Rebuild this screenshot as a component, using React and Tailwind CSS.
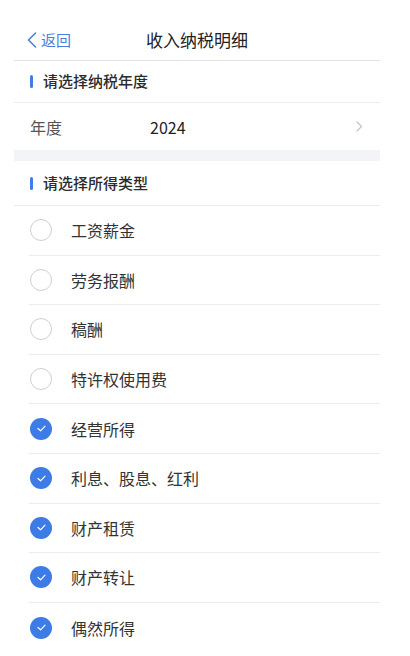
import React, { useState } from "react";

const TYPES = [
  { label: "工资薪金", checked: false },
  { label: "劳务报酬", checked: false },
  { label: "稿酬", checked: false },
  { label: "特许权使用费", checked: false },
  { label: "经营所得", checked: true },
  { label: "利息、股息、红利", checked: true },
  { label: "财产租赁", checked: true },
  { label: "财产转让", checked: true },
  { label: "偶然所得", checked: true },
];

function SectionTitle({ children, className = "" }) {
  return (
    <div className={`flex items-center pl-[16px] border-b border-[#ececec] ${className}`}>
      <span className="w-[3px] h-[13px] rounded-full bg-[#3f7ee8] mr-[10px]" />
      <span className="text-[15px] font-medium text-[#2b2b2b]">{children}</span>
    </div>
  );
}

function Radio({ checked }) {
  if (checked) {
    return (
      <span className="w-[22px] h-[22px] rounded-full bg-[#3d7ce6] flex items-center justify-center">
        <svg width="9" height="7" viewBox="0 0 9 7" fill="none">
          <path d="M1 3.5 L3.6 5.8 L8 1.2" stroke="#fff" strokeWidth="1.2" strokeLinecap="round" strokeLinejoin="round" />
        </svg>
      </span>
    );
  }
  return <span className="w-[22px] h-[22px] rounded-full border border-[#cfcfcf] bg-white" />;
}

export default function App() {
  const [items, setItems] = useState(TYPES);

  const toggle = (idx) =>
    setItems((prev) => prev.map((it, i) => (i === idx ? { ...it, checked: !it.checked } : it)));

  return (
    <div className="min-h-screen bg-white font-['Noto_Sans_CJK_SC','Noto_Sans',sans-serif] text-[#333]">
      <div className="ml-[14px] w-[366px] pt-[20px]">
        {/* header */}
        <div className="relative h-[41px] flex items-center justify-center border-b border-[#e3e3e3]">
          <button className="absolute left-[13px] top-0 h-full flex items-center text-[#4a80d9] text-[15px]">
            <svg width="10" height="16" viewBox="0 0 10 16" fill="none" className="mr-[4px]">
              <path d="M8.5 1 L1.5 8 L8.5 15" stroke="#4a80d9" strokeWidth="1.6" strokeLinecap="round" strokeLinejoin="round" />
            </svg>
            返回
          </button>
          <span className="text-[17px] text-[#222]">收入纳税明细</span>
        </div>

        {/* year section */}
        <SectionTitle className="h-[42px]">请选择纳税年度</SectionTitle>
        <div className="h-[47px] flex items-center pl-[16px] pr-[17px]">
          <span className="w-[120px] text-[16px] text-[#555]">年度</span>
          <span className="flex-1 text-[16px] text-[#222]">2024</span>
          <svg width="7" height="11" viewBox="0 0 7 11" fill="none">
            <path d="M1 1 L5.5 5.5 L1 10" stroke="#c4c4c4" strokeWidth="1.3" strokeLinecap="round" strokeLinejoin="round" />
          </svg>
        </div>
        <div className="h-[11px] bg-[#f3f4f8]" />

        {/* income types */}
        <SectionTitle className="h-[45px]">请选择所得类型</SectionTitle>
        <div className="pl-[15px]">
          {items.map((it, i) => (
            <div
              key={it.label}
              onClick={() => toggle(i)}
              className={`h-[49.6px] flex items-center pl-[1px] cursor-pointer ${
                i < items.length - 1 ? "border-b border-[#ececec]" : ""
              }`}
            >
              <Radio checked={it.checked} />
              <span className="ml-[19px] text-[16px] text-[#333]">{it.label}</span>
            </div>
          ))}
        </div>
      </div>
    </div>
  );
}
